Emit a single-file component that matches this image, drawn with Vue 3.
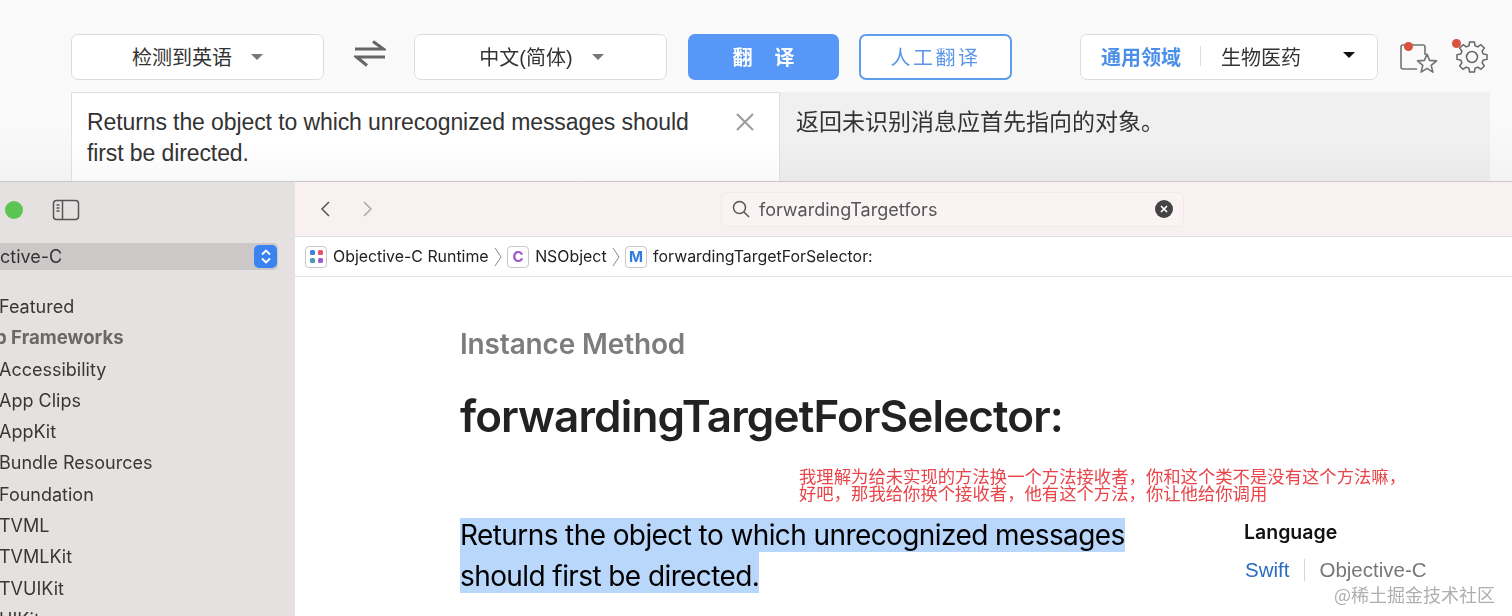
<script setup>
const sidebarItems = [
  { label: 'Featured', cls: '' },
  { label: 'p Frameworks', cls: 'head' },
  { label: 'Accessibility', cls: '' },
  { label: 'App Clips', cls: '' },
  { label: 'AppKit', cls: '' },
  { label: 'Bundle Resources', cls: '' },
  { label: 'Foundation', cls: '' },
  { label: 'TVML', cls: '' },
  { label: 'TVMLKit', cls: '' },
  { label: 'TVUIKit', cls: '' },
  { label: 'UIKit', cls: '' },
]

// Eight-toothed cog outline around the centre of a 34x34 box.
const gearPath = (() => {
  const teeth = 8
  const point = (r, a) => `${(17 + r * Math.cos(a)).toFixed(2)} ${(17 + r * Math.sin(a)).toFixed(2)}`
  let d = ''
  for (let i = 0; i < teeth; i++) {
    const c = (i * 2 * Math.PI) / teeth - Math.PI / 2
    const step = (2 * Math.PI) / teeth
    d += `${i ? 'L' : 'M'}${point(11.6, c - step * 0.34)}`
    d += `L${point(15.2, c - step * 0.2)}`
    d += `L${point(15.2, c + step * 0.2)}`
    d += `L${point(11.6, c + step * 0.34)}`
  }
  return d + 'Z'
})()
</script>

<template>
  <div class="page">
    <section class="translator">
      <div class="controls">
        <div class="select"><span>检测到英语</span><i class="caret"></i></div>
        <svg class="swap" width="32" height="28" viewBox="0 0 32 28" fill="none" stroke="#666" stroke-width="3">
          <path d="M1 9H29.500L19 1.500" />
          <path d="M31 17H2.500L13 25.500" />
        </svg>
        <div class="select second"><span>中文(简体)</span><i class="caret"></i></div>
        <button class="primary">翻&nbsp;&nbsp;&nbsp;&nbsp;译</button>
        <button class="outline">人工翻译</button>
        <div class="domain">
          <span class="blue">通用领域</span>
          <i class="sep"></i>
          <span class="field">生物医药</span>
          <i class="caret dark"></i>
        </div>
        <div class="tool fav">
          <svg width="38" height="36" viewBox="0 0 38 36" fill="none" stroke="#737373" stroke-width="1.600" stroke-linejoin="round">
            <path d="M17 29H3Q1 29 1 27V7Q1 5 3 5H23Q25 5 25 7V15" />
            <path d="M27 14L29.600 20.400L36.500 20.900L31.200 25.400L32.900 32.100L27 28.400L21.100 32.100L22.800 25.400L17.500 20.900L24.400 20.400Z" />
          </svg>
          <i class="dot dot-fav"></i>
        </div>
        <div class="tool gear">
          <svg width="34" height="34" viewBox="0 0 34 34" fill="none" stroke="#666" stroke-width="1.500" stroke-linejoin="round">
            <circle cx="17" cy="17" r="5.500" />
            <path :d="gearPath" />
          </svg>
          <i class="dot dot-gear"></i>
        </div>
      </div>
      <div class="panels">
        <div class="source">
          <p>Returns the object to which unrecognized messages should<br />first be directed.</p>
          <svg class="close" width="18" height="18" viewBox="0 0 18 18" stroke="#9a9a9a" stroke-width="2"><path d="M1 1L17 17M17 1L1 17" /></svg>
        </div>
        <div class="target"><p>返回未识别消息应首先指向的对象。</p></div>
      </div>
    </section>

    <section class="xcode">
      <aside class="sidebar">
        <div class="side-top">
          <i class="traffic"></i>
          <svg width="28" height="22" viewBox="0 0 28 22" fill="none" stroke="#555" stroke-width="1.500">
            <rect x="1.500" y="1.500" width="25" height="19" rx="3" />
            <path d="M10.500 1.500V20.500" />
            <path d="M4.500 6H7.500M4.500 9H7.500M4.500 12H7.500" stroke-width="1.300" />
          </svg>
        </div>
        <div class="lang-select">
          <span>ctive-C</span>
          <i class="stepper">
            <svg width="12" height="17" viewBox="0 0 12 17" fill="none" stroke="#fff" stroke-width="1.800"><path d="M2 6.500L6 2.500L10 6.500M2 10.500L6 14.500L10 10.500" /></svg>
          </i>
        </div>
        <ul class="side-list">
          <li v-for="item in sidebarItems" :key="item.label" :class="item.cls">{{ item.label }}</li>
        </ul>
      </aside>
      <main class="doc">
        <div class="toolbar">
          <div class="nav">
            <svg width="12" height="18" viewBox="0 0 12 18" fill="none" stroke="#555" stroke-width="1.500"><path d="M10 2L3 9L10 16" /></svg>
            <svg width="12" height="18" viewBox="0 0 12 18" fill="none" stroke="#aaa" stroke-width="1.500"><path d="M2 2L9 9L2 16" /></svg>
          </div>
          <div class="search">
            <svg width="20" height="20" viewBox="0 0 20 20" fill="none" stroke="#555" stroke-width="1.500"><circle cx="8.500" cy="8.500" r="6" /><path d="M13 13L18 18" /></svg>
            <span class="query">forwardingTargetfors</span>
            <i class="clear">
              <svg width="8" height="8" viewBox="0 0 8 8" stroke="#fff" stroke-width="1.700"><path d="M1 1L7 7M7 1L1 7" /></svg>
            </i>
          </div>
        </div>
        <nav class="crumbs">
          <i class="badge grid"><b class="c1"></b><b class="c2"></b><b class="c3"></b><b class="c4"></b></i>
          <span>Objective-C Runtime</span>
          <svg class="chev" width="8" height="20" viewBox="0 0 8 20" fill="none" stroke="#888" stroke-width="1"><path d="M1 1L7 10L1 19" /></svg>
          <i class="badge letter purple">C</i>
          <span>NSObject</span>
          <svg class="chev" width="8" height="20" viewBox="0 0 8 20" fill="none" stroke="#888" stroke-width="1"><path d="M1 1L7 10L1 19" /></svg>
          <i class="badge letter azure">M</i>
          <span>forwardingTargetForSelector:</span>
        </nav>
        <article class="body">
          <div class="eyebrow">Instance Method</div>
          <h1>forwardingTargetForSelector:</h1>
          <div class="note">我理解为给未实现的方法换一个方法接收者，你和这个类不是没有这个方法嘛，<br />好吧，那我给你换个接收者，他有这个方法，你让他给你调用</div>
          <div class="abstract-row">
            <p class="abstract"><mark>Returns the object to which unrecognized messages</mark><br /><mark class="second">should first be directed.</mark></p>
            <div class="language">
              <div class="lang-title">Language</div>
              <div class="lang-links"><a>Swift</a><i></i><span>Objective-C</span></div>
            </div>
          </div>
          <div class="watermark">@稀土掘金技术社区</div>
        </article>
      </main>
    </section>
  </div>
</template>

<style>
html, body { margin: 0; background: #fff; overflow: hidden; }
</style>

<style scoped>
.page {
  width: 1512px;
  height: 616px;
  overflow: hidden;
  display: flex;
  flex-direction: column;
  font-family: "Liberation Sans", "Noto Sans CJK SC", sans-serif;
  filter: blur(0.35px);
}
.translator {
  flex: none;
  height: 182px;
  box-sizing: border-box;
  padding: 34px 22px 0 71px;
  background: linear-gradient(#f9f9f9 0, #fafafa 120px, #f3f3f3 181px);
  border-bottom: 1px solid #c9c9c9;
}
.controls { display: flex; align-items: center; height: 46px; }
.select {
  width: 253px;
  height: 46px;
  box-sizing: border-box;
  background: #fff;
  border: 1px solid #dcdcdc;
  border-radius: 7px;
  display: flex;
  align-items: center;
  justify-content: center;
  gap: 19px;
  padding-bottom: 2px;
  font-size: 20px;
  color: #333;
}
.select.second { margin-left: 28px; padding-left: 2px; }
.caret {
  width: 0; height: 0;
  border-left: 6px solid transparent;
  border-right: 6px solid transparent;
  border-top: 6px solid #777;
  margin-top: 1px;
}
.caret.dark { border-top-color: #111; }
.swap { margin-left: 30px; margin-bottom: 6px; flex: none; }
.primary, .outline {
  height: 46px;
  box-sizing: border-box;
  border-radius: 7px;
  font: inherit;
  font-size: 20px;
  padding: 0 0 2px;
}
.primary {
  width: 151px;
  margin-left: 21px;
  background: #5797f7;
  color: #fff;
  border: 0;
  font-size: 20px;
  font-weight: 700;
}
.outline {
  width: 153px;
  margin-left: 20px;
  background: #fff;
  border: 2px solid #5f9ceb;
  color: #5b96e8;
  letter-spacing: 2.500px;
}
.domain {
  width: 298px;
  height: 46px;
  box-sizing: border-box;
  margin-left: 68px;
  background: #fff;
  border: 1px solid #dcdcdc;
  border-radius: 7px;
  display: flex;
  align-items: center;
  padding: 0 0 2px 20px;
  font-size: 20px;
}
.blue { color: #4c8fe8; font-weight: 700; }
.sep { width: 1px; height: 20px; background: #ddd; margin: 0 20px 0 19px; }
.field { color: #333; }
.domain .caret { margin-left: 42px; margin-top: -3px; }
.tool { position: relative; flex: none; align-self: flex-start; margin-top: 6px; }
.fav { margin-left: 22px; width: 38px; height: 36px; }
.gear { margin-left: 17px; width: 34px; height: 34px; }
.tool svg { display: block; }
.dot { position: absolute; width: 9px; height: 9px; border-radius: 50%; background: #d9513f; }
.dot-fav { left: 3.500px; top: 1.500px; }
.dot-gear { left: -3.500px; top: -1.500px; }

.panels { display: flex; height: 89px; margin-top: 12px; width: 1419px; }
.source {
  width: 709px;
  flex: none;
  box-sizing: border-box;
  background: linear-gradient(#fff 50px, #f8f8f8);
  border: 1px solid #dedede;
  border-bottom: 0;
  padding: 14px 0 0 15px;
  position: relative;
  color: #333;
}
.source p { margin: 0; font-size: 23px; line-height: 31px; letter-spacing: -0.1px; }
.close { position: absolute; left: 664px; top: 20px; }
.target { flex: 1; background: linear-gradient(#f0f0f0 50px, #e9e9e9); padding: 15px 0 0 16px; color: #333; }
.target p { margin: 0; font-size: 23px; line-height: 30px; }

.xcode { flex: 1; display: flex; min-height: 0; font-family: Inter, "Noto Sans", sans-serif; }
.sidebar { width: 295px; flex: none; background: #e6e1e1; color: #333; overflow: hidden; }
.side-top { height: 55px; display: flex; align-items: center; gap: 29px; padding-left: 5px; box-sizing: border-box; }
.traffic { width: 18px; height: 18px; border-radius: 50%; background: #5cc452; }
.lang-select {
  height: 27px;
  margin: 6px 17px 0 0;
  background: #cdc8c8;
  border-radius: 0 5px 5px 0;
  display: flex;
  align-items: center;
  justify-content: space-between;
  font-size: 18px;
  color: #333;
}
.stepper {
  width: 23px; height: 23px;
  margin-right: 1px;
  background: #3a83f1;
  border-radius: 5px;
  display: flex; align-items: center; justify-content: center;
}
.side-list { list-style: none; margin: 21px 0 0; padding: 0; }
.side-list li { height: 31.300px; line-height: 31.300px; font-size: 18px; white-space: nowrap; color: #3a3636; margin-left: -1px; }
.side-list li.head { font-weight: 700; font-size: 18.600px; color: #6d6868; margin-left: -5px; }

.doc { flex: 1; min-width: 0; background: #fff; display: flex; flex-direction: column; }
.toolbar {
  height: 55px;
  flex: none;
  box-sizing: border-box;
  background: #f9f0f1;
  border-bottom: 1px solid #e2dcdc;
  display: flex;
  align-items: center;
  padding-left: 24px;
}
.nav { display: flex; gap: 31px; width: 402px; }
.search {
  width: 463px;
  height: 35px;
  box-sizing: border-box;
  background: #faf2f3;
  border: 1px solid #f1e9ea;
  border-radius: 6px;
  display: flex;
  align-items: center;
  padding: 0 10px 0 9px;
  font-size: 18px;
  color: #555;
}
.query { margin-left: 8px; flex: 1; }
.clear {
  width: 18px; height: 18px;
  border-radius: 50%;
  background: #444;
  display: flex; align-items: center; justify-content: center;
}
.crumbs {
  height: 40px;
  flex: none;
  box-sizing: border-box;
  border-bottom: 1px solid #e3e3e3;
  display: flex;
  align-items: center;
  padding-left: 10px;
  font-size: 15.900px;
  color: #222;
}
.badge {
  width: 22px; height: 22px;
  box-sizing: border-box;
  border: 1px solid #c8c8c8;
  border-radius: 4px;
  margin-right: 6px;
  flex: none;
  font-style: normal;
}
.grid { display: grid; grid-template-columns: 5px 5px; gap: 3px; align-content: center; justify-content: center; }
.grid b { width: 5px; height: 5px; border-radius: 1.500px; }
.c1 { background: #3f7fe0; }
.c2 { background: #ea4f65; }
.c3 { background: #4a9db5; }
.c4 { background: #a25bd0; }
.letter { display: flex; align-items: center; justify-content: center; font-weight: 700; font-size: 15px; }
.purple { color: #9b59d0; }
.azure { color: #2f7de0; }
.chev { margin: 0 5.500px 0 5px; flex: none; }

.body { position: relative; flex: 1; padding: 50px 0 0 165px; min-height: 0; }
.eyebrow { font-size: 28px; font-weight: 600; line-height: 34px; color: #7d7d7d; letter-spacing: -0.15px; }
h1 { margin: 28px 0 0; font-size: 44px; line-height: 54px; font-weight: 600; color: #222; letter-spacing: -0.86px; white-space: nowrap; }
.note {
  margin: 24px 0 0 339px;
  font-family: "Noto Sans CJK SC", sans-serif;
  font-size: 17.350px;
  line-height: 17px;
  color: #e8454a;
  white-space: nowrap;
}
.abstract-row { display: flex; margin-top: 14px; }
.abstract { margin: 0; width: 785px; flex: none; font-size: 28px; line-height: 41px; color: #000; letter-spacing: -0.59px; white-space: nowrap; }
mark { background: #b9d6fb; color: inherit; }
mark.second { padding-top: 7px; }
.language { margin-left: -1px; }
.lang-title { font-size: 19.500px; font-weight: 600; color: #111; line-height: 24px; margin-top: 5px; }
.lang-links { display: flex; align-items: center; margin: 14px 0 0 1px; font-size: 20.500px; line-height: 24px; font-family: "Liberation Sans", sans-serif; }
.lang-links a { color: #2a6cc0; }
.lang-links i { width: 1px; height: 22px; background: #d5d5d5; margin: 0 14px 0 15px; }
.lang-links span { color: #777; }
.watermark {
  position: absolute;
  right: 17px;
  bottom: 9px;
  font-family: "Noto Sans CJK SC", sans-serif;
  font-size: 18px;
  color: rgba(130,130,130,.65);
  text-shadow: 0 0 2px #fff;
  white-space: nowrap;
}
</style>
